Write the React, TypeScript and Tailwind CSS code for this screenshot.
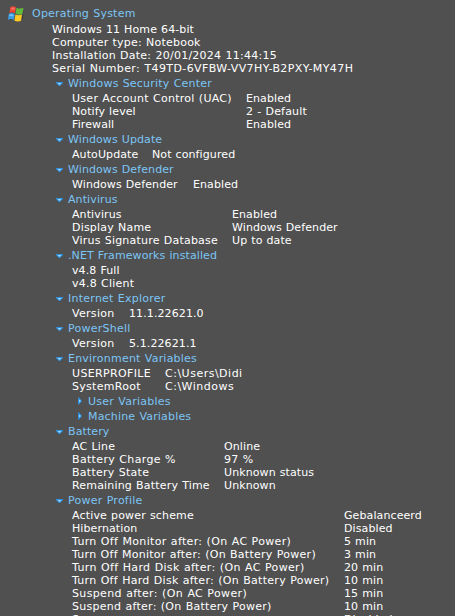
import React from "react";
import clsx from "clsx";

type Row = { label: string; value?: string; tracking?: string; valueTracking?: string };

type Section = {
  title: string;
  tracking?: string;
  labelWidth?: string;
  rows?: Row[];
  collapsed?: boolean;
  sections?: Section[];
};

const summary = [
  { text: "Windows 11 Home 64-bit", tracking: "tracking-[0.11px]" },
  { text: "Computer type: Notebook", tracking: "tracking-[0.22px]" },
  { text: "Installation Date: 20/01/2024 11:44:15", tracking: "tracking-[0.25px]" },
  { text: "Serial Number: T49TD-6VFBW-VV7HY-B2PXY-MY47H", tracking: "tracking-[0.39px]" },
];

const sections: Section[] = [
  {
    title: "Windows Security Center",
    tracking: "tracking-[0.21px]",
    labelWidth: "w-[174px]",
    rows: [
      { label: "User Account Control (UAC)", value: "Enabled", tracking: "tracking-[0.28px]" },
      { label: "Notify level", value: "2 - Default", valueTracking: "tracking-[0.18px]" },
      { label: "Firewall", value: "Enabled" },
    ],
  },
  {
    title: "Windows Update",
    labelWidth: "w-20",
    rows: [{ label: "AutoUpdate", value: "Not configured" }],
  },
  {
    title: "Windows Defender",
    labelWidth: "w-[121px]",
    rows: [{ label: "Windows Defender", value: "Enabled" }],
  },
  {
    title: "Antivirus",
    labelWidth: "w-40",
    rows: [
      { label: "Antivirus", value: "Enabled" },
      { label: "Display Name", value: "Windows Defender", tracking: "tracking-[0.2px]" },
      { label: "Virus Signature Database", value: "Up to date", tracking: "tracking-[0.21px]" },
    ],
  },
  {
    title: ".NET Frameworks installed",
    rows: [{ label: "v4.8 Full" }, { label: "v4.8 Client", tracking: "tracking-[0.22px]" }],
  },
  {
    title: "Internet Explorer",
    tracking: "tracking-[0.25px]",
    labelWidth: "w-[57px]",
    rows: [{ label: "Version", value: "11.1.22621.0", tracking: "tracking-[0.3px]" }],
  },
  {
    title: "PowerShell",
    tracking: "tracking-[0.25px]",
    labelWidth: "w-[57px]",
    rows: [{ label: "Version", value: "5.1.22621.1", tracking: "tracking-[0.3px]" }],
  },
  {
    title: "Environment Variables",
    tracking: "tracking-[0.22px]",
    labelWidth: "w-[93px]",
    rows: [
      { label: "USERPROFILE", value: "C:\\Users\\Didi", tracking: "tracking-[0.36px]", valueTracking: "tracking-[0.5px]" },
      { label: "SystemRoot", value: "C:\\Windows", tracking: "tracking-[0.3px]", valueTracking: "tracking-[0.5px]" },
    ],
    sections: [
      { title: "User Variables", tracking: "tracking-[0.25px]", collapsed: true },
      { title: "Machine Variables", tracking: "tracking-[0.18px]", collapsed: true },
    ],
  },
  {
    title: "Battery",
    labelWidth: "w-[152px]",
    rows: [
      { label: "AC Line", value: "Online", tracking: "tracking-[0.2px]" },
      { label: "Battery Charge %", value: "97 %", tracking: "tracking-[0.34px]", valueTracking: "tracking-[0.3px]" },
      { label: "Battery State", value: "Unknown status", tracking: "tracking-[0.27px]" },
      { label: "Remaining Battery Time", value: "Unknown", tracking: "tracking-[0.18px]" },
    ],
  },
  {
    title: "Power Profile",
    tracking: "tracking-[0.25px]",
    labelWidth: "w-[272px]",
    rows: [
      { label: "Active power scheme", value: "Gebalanceerd", tracking: "tracking-[0.16px]" },
      { label: "Hibernation", value: "Disabled" },
      { label: "Turn Off Monitor after: (On AC Power)", value: "5 min", tracking: "tracking-[0.33px]" },
      { label: "Turn Off Monitor after: (On Battery Power)", value: "3 min", tracking: "tracking-[0.27px]" },
      { label: "Turn Off Hard Disk after: (On AC Power)", value: "20 min", tracking: "tracking-[0.35px]" },
      { label: "Turn Off Hard Disk after: (On Battery Power)", value: "10 min", tracking: "tracking-[0.29px]" },
      { label: "Suspend after: (On AC Power)", value: "15 min", tracking: "tracking-[0.36px]" },
      { label: "Suspend after: (On Battery Power)", value: "10 min", tracking: "tracking-[0.27px]" },
      { label: "Screen saver", value: "Disabled" },
    ],
  },
];

export default function App() {
  return (
    <main className="h-[616px] w-[455px] overflow-hidden bg-[#505050] pt-[7px] font-['DejaVu_Sans',Verdana,sans-serif] text-[11px] leading-[13px] tracking-[0.1px] whitespace-nowrap text-white [word-spacing:0.4px]">
      <h1 className="flex h-4 items-start gap-2 pl-2 tracking-[0.23px] text-[#7cc5f5]">
        <WindowsLogo />
        Operating System
      </h1>
      <ul className="pl-[52px]">
        {summary.map((line) => (
          <li key={line.text} className={line.tracking}>
            {line.text}
          </li>
        ))}
      </ul>
      <div className="mt-0.5 flex flex-col gap-0.5 pl-14">
        {sections.map((section) => (
          <TreeSection key={section.title} {...section} />
        ))}
      </div>
    </main>
  );
}

const TreeSection = ({ title, tracking, labelWidth, rows, collapsed, sections }: Section) => {
  return (
    <section className="flex flex-col gap-0.5">
      <h2 className={clsx("flex text-[#7cc5f5]", tracking)}>
        <Arrow collapsed={collapsed} />
        {title}
      </h2>
      {rows && (
        <dl className="pl-4">
          {rows.map((row) => (
            <div key={row.label} className="flex">
              <dt className={clsx("shrink-0", labelWidth, row.tracking)}>{row.label}</dt>
              {row.value && <dd className={row.valueTracking}>{row.value}</dd>}
            </div>
          ))}
        </dl>
      )}
      {sections && (
        <div className="flex flex-col gap-0.5 pl-5">
          {sections.map((child) => (
            <TreeSection key={child.title} {...child} />
          ))}
        </div>
      )}
    </section>
  );
};

const Arrow = ({ collapsed }: { collapsed?: boolean }) => {
  return (
    <svg className="h-[13px] w-3 shrink-0" viewBox="0 0 12 13">
      {collapsed ? (
        <>
          <path d="M2 2.5h1L6 6 3 9.500H2z" fill="#2f8fdc" />
          <path d="M3 4.500 5 6 3 7.500z" fill="#9ad8ff" />
        </>
      ) : (
        <>
          <path d="M0 5h7v1L4 9H3L0 6z" fill="#2f8fdc" />
          <path d="M1.500 6h4L3.500 8z" fill="#9ad8ff" />
        </>
      )}
    </svg>
  );
};

const WindowsLogo = () => {
  return (
    <svg className="-mt-px h-4 w-4 shrink-0" viewBox="0 0 16 16">
      <path d="M2.500 13.500c2-1 3.500-.6 5 .4s4 1.600 6 .2L15.500 4l-.5 8.500c-2 2.800-5 3-7.500 1.700-2-1-3.500-1-5 0z" fill="#303030" opacity=".7" />
      <path d="M2.500.9C4.300-.2 6.300.1 7.900 1.200L6.900 7.300C5.200 6.200 3.200 6 1.400 7z" fill="#ee4538" />
      <path d="M8.500 1.700c2.200 1.100 4.600 1.200 6.900.1l-1 6.100c-2.200 1.100-4.600.9-6.900-.1z" fill="#62b83c" />
      <path d="M.9 7.700c2-1 4-.8 5.800.3l-1 6c-1.800-1.100-3.800-1.300-5.800-.3z" fill="#3a9be3" />
      <path d="M7.400 8.500c2.200 1 4.400 1.200 6.600.1l-1 6.200c-2.200 1.100-4.400.9-6.600-.1z" fill="#fbc921" />
      <path d="M3.100 1.900c1.300-.6 2.700-.5 4 .1l-.3 1.900c-1.400-.6-2.800-.6-4 0z" fill="#ff8a70" opacity=".6" />
      <path d="M1.500 8.600c1.300-.5 2.800-.4 4 .3l-.3 1.700c-1.200-.6-2.700-.7-4-.2z" fill="#91d5ff" opacity=".7" />
    </svg>
  );
};
